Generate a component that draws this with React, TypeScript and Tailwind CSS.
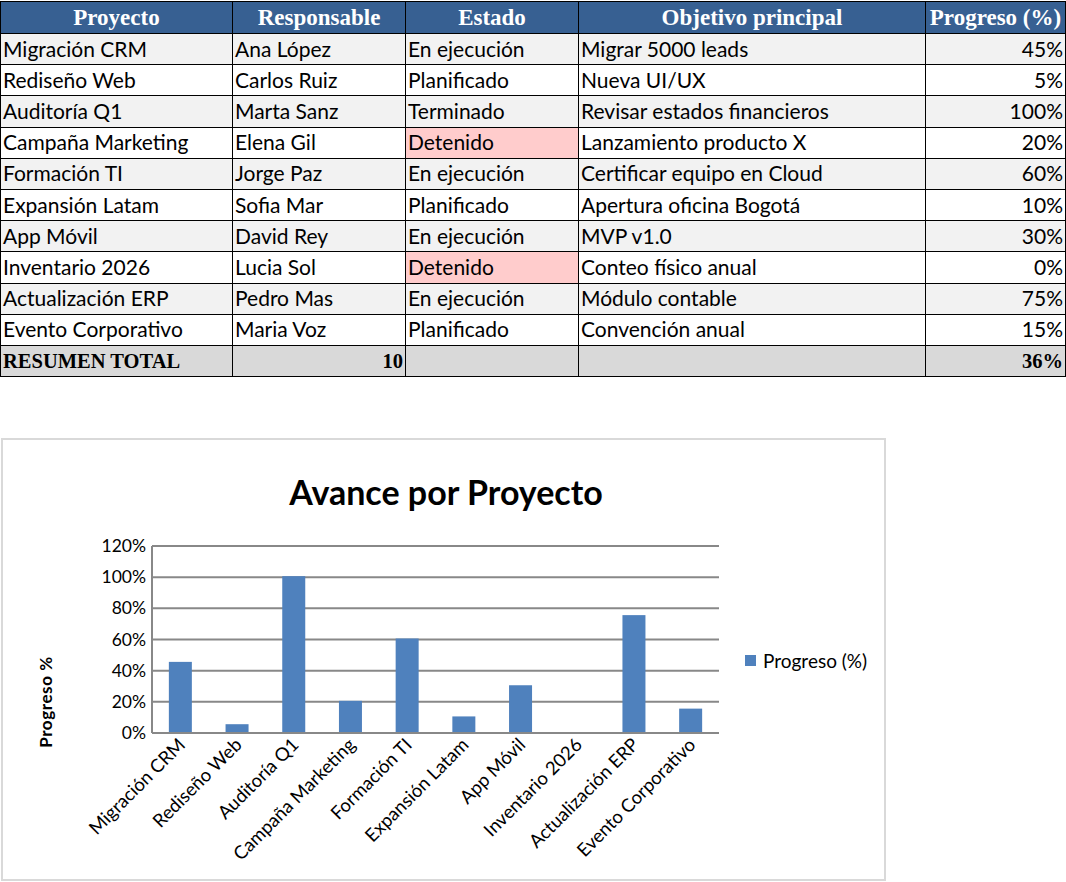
const rows = [
  { proyecto: "Migración CRM", resp: "Ana López", estado: "En ejecución", objetivo: "Migrar 5000 leads", progreso: 45 },
  { proyecto: "Rediseño Web", resp: "Carlos Ruiz", estado: "Planificado", objetivo: "Nueva UI/UX", progreso: 5 },
  { proyecto: "Auditoría Q1", resp: "Marta Sanz", estado: "Terminado", objetivo: "Revisar estados financieros", progreso: 100 },
  { proyecto: "Campaña Marketing", resp: "Elena Gil", estado: "Detenido", objetivo: "Lanzamiento producto X", progreso: 20 },
  { proyecto: "Formación TI", resp: "Jorge Paz", estado: "En ejecución", objetivo: "Certificar equipo en Cloud", progreso: 60 },
  { proyecto: "Expansión Latam", resp: "Sofia Mar", estado: "Planificado", objetivo: "Apertura oficina Bogotá", progreso: 10 },
  { proyecto: "App Móvil", resp: "David Rey", estado: "En ejecución", objetivo: "MVP v1.0", progreso: 30 },
  { proyecto: "Inventario 2026", resp: "Lucia Sol", estado: "Detenido", objetivo: "Conteo físico anual", progreso: 0 },
  { proyecto: "Actualización ERP", resp: "Pedro Mas", estado: "En ejecución", objetivo: "Módulo contable", progreso: 75 },
  { proyecto: "Evento Corporativo", resp: "Maria Voz", estado: "Planificado", objetivo: "Convención anual", progreso: 15 },
];

const headers = ["Proyecto", "Responsable", "Estado", "Objetivo principal", "Progreso (%)"];

const serif = "font-['Liberation_Serif','Times_New_Roman',serif]";
const sans = "font-['Lato','Noto_Sans',sans-serif]";

// chart geometry (relative to chart box)
const AX = 149;
const AR = 716;
const TOP = 106;
const BASE = 293;
const STEP = (BASE - TOP) / 6;
const CAT = (AR - AX) / rows.length;

const Chart = () => (
  <svg width="881" height="439" className="block">
    <text x="443" y="65" textAnchor="middle" fontFamily="Lato, sans-serif" fontWeight="700" fontSize="34" fill="#000">
      Avance por Proyecto
    </text>

    {[0, 1, 2, 3, 4, 5, 6].map((i) => (
      <g key={i}>
        <line x1={AX} x2={AR} y1={BASE - i * STEP} y2={BASE - i * STEP} stroke="#888" strokeWidth="2" />
        <text x="143" y={BASE - i * STEP + 6} textAnchor="end" fontFamily="Lato, sans-serif" fontSize="17.5" fill="#000">
          {i * 20}%
        </text>
      </g>
    ))}
    <line x1={AX} x2={AX} y1={TOP} y2={BASE} stroke="#888" strokeWidth="2" />

    {rows.map((r, i) => {
      const cx = AX + CAT * (i + 0.5);
      const h = (r.progreso / 120) * (BASE - TOP);
      return (
        <g key={r.proyecto}>
          <rect x={cx - 11.5} y={BASE - 1 - h} width="23" height={h} fill="#4f81bd" />
          <text
            x={cx + 6}
            y={BASE + 13}
            textAnchor="end"
            transform={`rotate(-45 ${cx + 6} ${BASE + 13})`}
            fontFamily="Lato, sans-serif"
            fontSize="18.5"
            fill="#000"
          >
            {r.proyecto}
          </text>
        </g>
      );
    })}

    <text
      x="45"
      y="262"
      textAnchor="middle"
      transform="rotate(-90 45 262)"
      dominantBaseline="middle"
      fontFamily="Lato, sans-serif"
      fontWeight="700"
      fontSize="17"
      letterSpacing="0.6"
      fill="#000"
    >
      Progreso %
    </text>

    <rect x="742" y="215" width="11" height="11" fill="#4f81bd" />
    <text x="760" y="228" fontFamily="Lato, sans-serif" fontSize="19" fill="#000">
      Progreso (%)
    </text>
  </svg>
);

export default function App() {
  return (
    <div className="min-h-[882px] bg-white pt-px">
      <table className="w-[1065px] table-fixed border-collapse">
        <colgroup>
          <col className="w-[232px]" />
          <col className="w-[173px]" />
          <col className="w-[173px]" />
          <col className="w-[347px]" />
          <col className="w-[140px]" />
        </colgroup>
        <thead>
          <tr className="h-[32px] bg-[#376092]">
            {headers.map((h) => (
              <th
                key={h}
                className={`overflow-hidden whitespace-nowrap border border-black p-0 text-center text-[23px] font-bold leading-none text-white ${serif}`}
              >
                {h}
              </th>
            ))}
          </tr>
        </thead>
        <tbody className={`${sans} text-[21px] leading-none text-black`}>
          {rows.map((r, i) => (
            <tr key={r.proyecto} className={`h-[31.2px] ${i % 2 === 0 ? "bg-[#f2f2f2]" : "bg-white"}`}>
              <td className="whitespace-nowrap border border-black px-[2px] pt-0 pb-[2px]">{r.proyecto}</td>
              <td className="whitespace-nowrap border border-black px-[2px] pt-0 pb-[2px]">{r.resp}</td>
              <td
                className={`whitespace-nowrap border border-black px-[2px] pt-0 pb-[2px] ${
                  r.estado === "Detenido" ? "bg-[#ffcccc]" : ""
                }`}
              >
                {r.estado}
              </td>
              <td className="whitespace-nowrap border border-black px-[2px] pt-0 pb-[2px]">{r.objetivo}</td>
              <td className="whitespace-nowrap border border-black px-[2px] pt-0 pb-[2px] text-right">{r.progreso}%</td>
            </tr>
          ))}
          <tr className={`h-[31px] bg-[#d9d9d9] ${serif} text-[20.5px] font-bold`}>
            <td className="whitespace-nowrap border border-black px-[2px] py-0">RESUMEN TOTAL</td>
            <td className="border border-black px-[2px] py-0 text-right">10</td>
            <td className="border border-black p-0"></td>
            <td className="border border-black p-0"></td>
            <td className="border border-black px-[2px] py-0 text-right">36%</td>
          </tr>
        </tbody>
      </table>

      <div className="mt-[61px] ml-[1px] w-[885px] border-2 border-[#d9d9d9] bg-white">
        <Chart />
      </div>
    </div>
  );
}
